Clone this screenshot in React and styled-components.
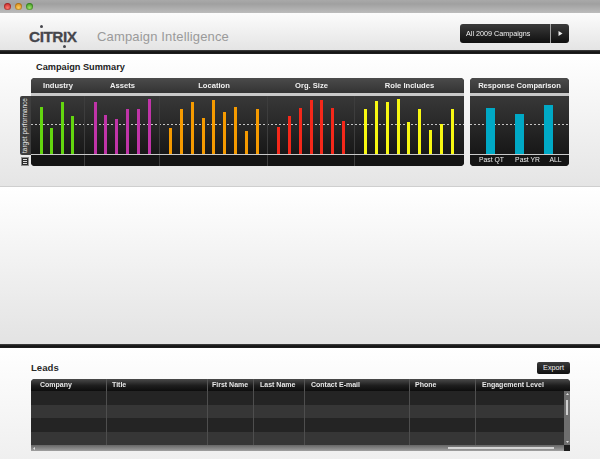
import React from "react";
import styled, { createGlobalStyle, css } from "styled-components";

const Global = createGlobalStyle`
  html, body { margin: 0; padding: 0; background: #fff; }
  body { font-family: "Liberation Sans", Arial, sans-serif; }
`;

// own layer keeps the small light-on-dark text free of coloured fringes
const softText = css`
  will-change: opacity;
`;

const Page = styled.div`
  width: 600px;
  height: 459px;
  overflow: hidden;
  display: flex;
  flex-direction: column;
`;

const TitleBar = styled.div`
  height: 13px;
  flex: none;
  display: flex;
  align-items: center;
  gap: 4px;
  padding: 0 0 1px 4px;
  box-sizing: border-box;
  background: linear-gradient(#a9a9a9, #a0a0a0 30%, #bcbcbc);
`;

const Light = styled.span`
  width: 7px;
  height: 7px;
  border-radius: 50%;
  box-shadow: inset 0 0 0 1px rgba(0, 0, 0, 0.2);
  background: radial-gradient(circle at 50% 70%, ${(p) => p.$glow}, ${(p) => p.$color} 75%);
`;

const Header = styled.header`
  height: 37px;
  flex: none;
  box-sizing: border-box;
  display: flex;
  align-items: center;
  padding: 4px 31px 0 29px;
  background: linear-gradient(#fcfcfc, #e4e4e4);
`;

const Logo = styled.div`
  width: 68px;
  flex: none;
  padding-top: 5px;
  font-size: 15.4px;
  line-height: 15px;
  font-weight: 700;
  letter-spacing: -0.5px;
  color: #46464c;
  -webkit-text-stroke: 0.3px #46464c;
`;

const LogoI = styled.span`
  position: relative;
  &::after {
    content: "";
    position: absolute;
    left: 0.5px;
    ${(p) => (p.$below ? "bottom: -3px;" : "top: -3px;")}
    width: 3px;
    height: 3px;
    border-radius: 50%;
    background: #46464c;
  }
`;

const AppName = styled.div`
  font-size: 13px;
  letter-spacing: 0.16px;
  color: #9a9a9a;
  flex: 1;
  padding-top: 5px;
`;

const Picker = styled.div`
  width: 109px;
  height: 19px;
  display: flex;
  border-radius: 3px;
  background: linear-gradient(#3b3b3b, #0f0f0f);
  color: #f2f2f2;
  font-size: 7.2px;
  line-height: 19px;
`;

const PickerLabel = styled.div`
  flex: 1;
  padding-left: 6px;
  border-right: 1px solid #a5a5a5;
  ${softText}
`;

const PickerArrow = styled.div`
  width: 18px;
  display: flex;
  align-items: center;
  justify-content: center;
`;

const Rule = styled.div`
  height: 4px;
  flex: none;
  background: linear-gradient(#444 0, #111 50%, #222 100%);
`;

const Summary = styled.section`
  height: 133px;
  flex: none;
  box-sizing: border-box;
  padding: 7px 0 0 20px;
  background: linear-gradient(#ffffff, #e5e5e5);
  border-bottom: 1px solid #cfcfcf;
`;

const SectionTitle = styled.h2`
  margin: 0 0 0 16px;
  height: 17px;
  font-size: 9.2px;
  line-height: 12px;
  font-weight: 700;
  color: #1c1c1c;
`;

const Charts = styled.div`
  display: flex;
  align-items: flex-start;
`;

const SideRail = styled.div`
  width: 11px;
  flex: none;
  margin-top: 18px;
  display: flex;
  flex-direction: column;
  gap: 2px;
`;

const SideLabel = styled.div`
  height: 59px;
  background: #3e3e3e;
  color: #e6e6e6;
  font-size: 6.5px;
  line-height: 10px;
  text-align: center;
  writing-mode: vertical-rl;
  transform: rotate(180deg);
  border-radius: 0 2px 2px 0;
`;

const SideButton = styled.div`
  width: 8px;
  height: 9px;
  box-sizing: border-box;
  margin-left: 1px;
  background: #2a2a2a;
  border: 1px solid #8f8f8f;
  display: flex;
  align-items: center;
  justify-content: center;
`;

const Panel = styled.div`
  width: ${(p) => p.$width}px;
  flex: none;
  margin-left: ${(p) => p.$gap || 0}px;
  border-radius: 4px;
  overflow: hidden;
  background: #151515;
`;

const PanelHead = styled.div`
  height: 15px;
  display: flex;
  background: linear-gradient(#4b4b4b, #333);
  border-bottom: 3px solid #c9c9c9;
`;

const HeadCell = styled.div`
  width: ${(p) => p.$width}px;
  flex: none;
  font-size: 7.6px;
  font-weight: 700;
  line-height: 16px;
  text-align: center;
  color: #f0f0f0;
  ${softText}
`;

const Plot = styled.div`
  position: relative;
  height: 58px;
  display: flex;
  background: linear-gradient(#383838, #171717);
  border-bottom: 1px solid #c9c9c9;
  &::before {
    content: "";
    position: absolute;
    left: 0;
    right: 0;
    top: 28px;
    height: 1px;
    background: repeating-linear-gradient(90deg, #c4c4c4 0 2px, transparent 2px 4px);
  }
`;

const Group = styled.div`
  position: relative;
  width: ${(p) => p.$width}px;
  flex: none;
  box-sizing: border-box;
  padding-left: ${(p) => p.$pad}px;
  display: flex;
  align-items: flex-end;
  gap: ${(p) => p.$gap}px;
  border-right: ${(p) => (p.$last ? "none" : "1px solid #3d3d3d")};
`;

const Bar = styled.div`
  width: ${(p) => p.$w || 3}px;
  flex: none;
  background: ${(p) => p.$color};
`;

const PanelFoot = styled.div`
  height: 11px;
  display: flex;
  background: #141414;
`;

const FootCell = styled.div`
  width: ${(p) => p.$width}px;
  flex: none;
  box-sizing: border-box;
  border-right: ${(p) => (p.$last ? "none" : "1px solid #3d3d3d")};
`;

const FootLabel = styled.div`
  width: ${(p) => p.$width}px;
  flex: none;
  font-size: 6.8px;
  line-height: 10px;
  text-align: center;
  color: #eee;
  ${softText}
`;

const Middle = styled.div`
  flex: 1;
  background: linear-gradient(#ffffff, #e3e3e3);
`;

const Leads = styled.section`
  height: 111px;
  flex: none;
  box-sizing: border-box;
  padding: 15px 30px 0 31px;
  background: linear-gradient(#ffffff, #efefef);
`;

const LeadsTop = styled.div`
  height: 16px;
  display: flex;
  justify-content: space-between;
  align-items: flex-start;
`;

const LeadsTitle = styled.h2`
  margin: 0;
  font-size: 9.6px;
  line-height: 10px;
  font-weight: 700;
  color: #2a2a2a;
`;

const ExportButton = styled.button`
  width: 33px;
  height: 12px;
  padding: 0;
  border: 0;
  border-radius: 2px;
  background: linear-gradient(#3a3a3a, #101010);
  color: #f0f0f0;
  font: 7.2px/12px "Liberation Sans", Arial, sans-serif;
  margin-top: -1px;
`;

const Table = styled.div`
  position: relative;
  width: 539px;
  border-radius: 4px 4px 0 0;
  overflow: hidden;
  background: #222;
`;

const TableRow = styled.div`
  display: grid;
  grid-template-columns: 76px 101px 46px 51px 105px 66px 94px;
  height: ${(p) => p.$height}px;
  background: ${(p) => p.$bg};
`;

const HeadRow = styled(TableRow)`
  background: linear-gradient(#4a4a4a 0, #1d1d1d 55%, #0d0d0d);
`;

const ColHead = styled.div`
  font-size: 7px;
  font-weight: 700;
  line-height: 11px;
  color: #e8e8e8;
  padding-left: ${(p) => p.$pad}px;
  border-right: 1px solid #555;
  white-space: nowrap;
  ${softText}
  &:last-child { border-right: 0; }
`;

const Cell = styled.div`
  border-right: 1px solid #4e4e4e;
  &:last-child { border-right: 0; }
`;

const VScroll = styled.div`
  position: absolute;
  right: 0;
  top: 12px;
  bottom: 6px;
  width: 6px;
  background: #6e6e6e;
  display: flex;
  flex-direction: column;
  justify-content: space-between;
  align-items: center;
  padding: 2px 0;
  box-sizing: border-box;
  &::after {
    content: "";
    position: absolute;
    left: 2px;
    top: 9px;
    width: 2px;
    height: 15px;
    background: #cfcfcf;
  }
`;

const HScroll = styled.div`
  position: relative;
  height: 6px;
  padding-left: 2px;
  display: flex;
  align-items: center;
  background: linear-gradient(#666, #a0a0a0);
  &::before {
    content: "";
    position: absolute;
    left: 417px;
    width: 106px;
    top: 2px;
    height: 2px;
    background: #d5d5d5;
  }
  &::after {
    content: "";
    position: absolute;
    right: 0;
    top: 0;
    width: 6px;
    height: 6px;
    background: #1c1c1c;
  }
`;

const ScrollArrow = styled.svg`
  display: block;
  flex: none;
`;

const groups = [
  { name: "Industry", width: 54, pad: 8.5, gap: 7.6, color: "#63d60f", bars: [47, 26, 52, 38] },
  { name: "Assets", width: 75, pad: 8.5, gap: 7.85, color: "#c034a8", bars: [52, 39, 35, 45, 45, 55] },
  { name: "Location", width: 108, pad: 9, gap: 7.85, color: "#f59a00", bars: [26, 45, 52, 36, 54, 42, 47, 23, 45] },
  { name: "Org. Size", width: 87, pad: 9, gap: 7.85, color: "#f5281a", bars: [27, 38, 46, 54, 54, 46, 33] },
  { name: "Role Includes", width: 109, pad: 9, gap: 7.85, color: "#f8f812", bars: [45, 53, 52, 55, 32, 45, 24, 30, 45], last: true },
];

const compare = [
  { name: "Past QT", height: 46, label: 43 },
  { name: "Past YR", height: 40, label: 29 },
  { name: "ALL", height: 49, label: 27 },
];

const columns = [
  ["Company", 9],
  ["Title", 5],
  ["First Name", 4],
  ["Last Name", 6],
  ["Contact E-mail", 6],
  ["Phone", 5],
  ["Engagement Level", 6],
];

const rows = [
  [14, "#242424"],
  [13, "#363636"],
  [14, "#242424"],
  [13, "#363636"],
];

export default function App() {
  return (
    <Page>
      <Global />
      <TitleBar>
        <Light $color="#c92a2a" $glow="#ff7a6e" />
        <Light $color="#d98a16" $glow="#ffd060" />
        <Light $color="#3f9e22" $glow="#9fe26a" />
      </TitleBar>
      <Header>
        <Logo>
          C<LogoI>I</LogoI>TR<LogoI $below>I</LogoI>X
        </Logo>
        <AppName>Campaign Intelligence</AppName>
        <Picker>
          <PickerLabel>All 2009 Campaigns</PickerLabel>
          <PickerArrow>
            <svg width="5" height="5" viewBox="0 0 5 5">
              <path d="M0.5 0 L4.5 2.5 L0.5 5 Z" fill="#eee" />
            </svg>
          </PickerArrow>
        </Picker>
      </Header>
      <Rule />
      <Summary>
        <SectionTitle>Campaign Summary</SectionTitle>
        <Charts>
          <SideRail>
            <SideLabel>target performance</SideLabel>
            <SideButton>
              <svg width="4" height="5" viewBox="0 0 4 5">
                <path d="M0 0.5 H4 M0 2.5 H4 M0 4.5 H4" stroke="#ddd" strokeWidth="1" />
              </svg>
            </SideButton>
          </SideRail>
          <Panel $width={433}>
            <PanelHead>
              {groups.map((g) => (
                <HeadCell key={g.name} $width={g.width}>{g.name}</HeadCell>
              ))}
            </PanelHead>
            <Plot>
              {groups.map((g) => (
                <Group key={g.name} $width={g.width} $pad={g.pad} $gap={g.gap} $last={g.last}>
                  {g.bars.map((h, i) => (
                    <Bar key={i} $color={g.color} style={{ height: h }} />
                  ))}
                </Group>
              ))}
            </Plot>
            <PanelFoot>
              {groups.map((g) => (
                <FootCell key={g.name} $width={g.width} $last={g.last} />
              ))}
            </PanelFoot>
          </Panel>
          <Panel $width={99} $gap={6}>
            <PanelHead>
              <HeadCell $width={99}>Response Comparison</HeadCell>
            </PanelHead>
            <Plot>
              <Group $width={99} $pad={16} $gap={20} $last>
                {compare.map((c) => (
                  <Bar key={c.name} $w={9} $color="#00a9c6" style={{ height: c.height }} />
                ))}
              </Group>
            </Plot>
            <PanelFoot>
              {compare.map((c) => (
                <FootLabel key={c.name} $width={c.label}>{c.name}</FootLabel>
              ))}
            </PanelFoot>
          </Panel>
        </Charts>
      </Summary>
      <Middle />
      <Rule />
      <Leads>
        <LeadsTop>
          <LeadsTitle>Leads</LeadsTitle>
          <ExportButton>Export</ExportButton>
        </LeadsTop>
        <Table>
          <HeadRow $height={12}>
            {columns.map(([name, pad]) => (
              <ColHead key={name} $pad={pad}>{name}</ColHead>
            ))}
          </HeadRow>
          {rows.map(([h, bg], i) => (
            <TableRow key={i} $height={h} $bg={bg}>
              {columns.map(([name]) => (
                <Cell key={name} />
              ))}
            </TableRow>
          ))}
          <VScroll>
            <ScrollArrow width="3" height="2" viewBox="0 0 3 2">
              <path d="M0 2 L1.5 0 L3 2 Z" fill="#ddd" />
            </ScrollArrow>
            <ScrollArrow width="3" height="2" viewBox="0 0 3 2">
              <path d="M0 0 L1.5 2 L3 0 Z" fill="#ddd" />
            </ScrollArrow>
          </VScroll>
          <HScroll>
            <ScrollArrow width="2" height="3" viewBox="0 0 2 3">
              <path d="M2 0 L0 1.5 L2 3 Z" fill="#ddd" />
            </ScrollArrow>
          </HScroll>
        </Table>
      </Leads>
    </Page>
  );
}
